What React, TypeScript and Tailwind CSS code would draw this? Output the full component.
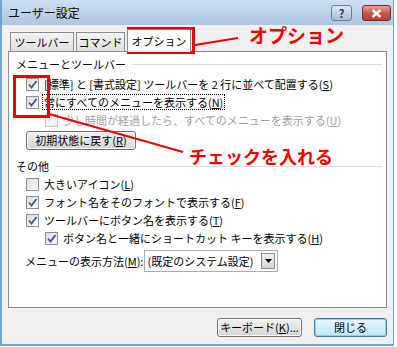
import type { ReactNode } from 'react';

const FONT = { fontFamily: '"Noto Sans CJK JP", "Noto Sans", sans-serif' };

function CheckBox({ checked, disabled }: { checked?: boolean; disabled?: boolean }) {
  return (
    <div
      className={`w-[13px] h-[13px] shrink-0 border flex items-center justify-center ${
        disabled ? 'border-[#c8c8c8] bg-[#f4f4f4]' : 'border-[#8f8f8f] bg-gradient-to-br from-[#dcdcdc] to-[#fbfbfb]'
      }`}
    >
      {checked && (
        <svg width="11" height="11" viewBox="0 0 11 11">
          <path d="M2 5.5 L4.5 8.5 L9.5 2" fill="none" stroke="#3b5a9a" strokeWidth="1.8" />
        </svg>
      )}
    </div>
  );
}

function Row({ checked, disabled, indent, focus, children }: { checked?: boolean; disabled?: boolean; indent?: boolean; focus?: boolean; children: ReactNode }) {
  return (
    <div className={`flex items-center h-[18px] ${indent ? 'pl-[36px]' : 'pl-[17px]'}`}>
      <CheckBox checked={checked} disabled={disabled} />
      <span
        className={`ml-[3px] px-px leading-[14px] whitespace-nowrap ${disabled ? 'text-[#a0a0a0]' : 'text-black'} ${
          focus ? 'border border-dotted border-black' : 'border border-transparent'
        }`}
      >
        {children}
      </span>
    </div>
  );
}

function GroupLabel({ children }: { children: ReactNode }) {
  return (
    <div className="flex items-center h-[16px] pl-[7px] pr-[4px]">
      <span className="whitespace-nowrap">{children}</span>
      <div className="flex-1 h-px bg-[#d5dfe5] ml-[6px] mt-px" />
    </div>
  );
}

function VistaButton({ children, isDefault, className = '' }: { children: ReactNode; isDefault?: boolean; className?: string }) {
  return (
    <div
      className={`h-[19px] rounded-[3px] border flex items-center justify-center whitespace-nowrap ${
        isDefault
          ? 'border-[#3c7fb1] shadow-[inset_0_0_0_1px_#8ed0f5] bg-gradient-to-b from-[#eaf6fd] to-[#bee6fd]'
          : 'border-[#707070] shadow-[inset_0_0_0_1px_#fcfcfc] bg-gradient-to-b from-[#f2f2f2] to-[#d5d5d5]'
      } ${className}`}
    >
      {children}
    </div>
  );
}

export default function App() {
  return (
    <div className="relative w-[397px] h-[347px] bg-white text-[11px] text-black overflow-hidden" style={FONT}>
      <div className="w-[394px] h-[346px] flex flex-col border-l-[2px] border-r border-b-[2px] border-[#6fa6cf] bg-[#f0f0f0]">
        {/* Title bar */}
        <div className="h-[25px] shrink-0 flex items-center bg-gradient-to-b from-[#cddff2] to-[#adc6e3] pl-[6px] pr-[2px]">
          <span className="leading-none text-[12px]">ユーザー設定</span>
          <div className="ml-auto flex items-center gap-[10px] mt-[1px]">
            <div className="w-[21px] h-[16px] rounded-[3px] border border-[#6d7f99] bg-gradient-to-b from-[#dde8f4] to-[#a9bcd6] flex items-center justify-center text-[11px] font-bold text-[#2a3850] leading-none">
              ?
            </div>
            <div className="w-[29px] h-[16px] rounded-[3px] border border-[#7c2a24] bg-gradient-to-b from-[#e3a396] via-[#c75a4a] to-[#b8412f] flex items-center justify-center">
              <svg width="11" height="9" viewBox="0 0 11 9">
                <path d="M1.5 1 L9.5 8 M9.5 1 L1.5 8" stroke="#fff" strokeWidth="2.4" />
              </svg>
            </div>
          </div>
        </div>

        {/* Body */}
        <div className="flex-1 flex flex-col px-[6px]">
          {/* Tabs */}
          <div className="h-[26px] flex items-end pl-[2px]">
            <div className="h-[19px] w-[64px] border border-b-0 border-[#898c95] bg-gradient-to-b from-[#f4f4f4] to-[#e0e0e0] flex items-center justify-center whitespace-nowrap">
              ツールバー
            </div>
            <div className="h-[19px] w-[49px] ml-[2px] border border-b-0 border-[#898c95] bg-gradient-to-b from-[#f4f4f4] to-[#e0e0e0] flex items-center justify-center whitespace-nowrap">
              コマンド
            </div>
            <div className="relative z-10 -mb-px h-[23px] w-[64px] ml-[2px] border border-b-0 border-[#898c95] bg-white flex items-center justify-center whitespace-nowrap">
              オプション
            </div>
          </div>

          {/* Panel */}
          <div className="h-[257px] border border-[#898c95] bg-white flex flex-col pt-[4px]">
            <GroupLabel>メニューとツールバー</GroupLabel>
            <div className="mt-[3px]">
              <Row checked>
                [標準] と [書式設定] ツールバーを 2 行に並べて配置する(<u>S</u>)
              </Row>
              <Row checked focus>
                常にすべてのメニューを表示する(<u>N</u>)
              </Row>
              <Row disabled indent>
                少し時間が経過したら、すべてのメニューを表示する(<u>U</u>)
              </Row>
            </div>
            <div className="pl-[17px] mt-[2px]">
              <VistaButton className="w-[110px]">
                初期状態に戻す(<u>R</u>)
              </VistaButton>
            </div>
            <div className="mt-[8px]">
              <GroupLabel>その他</GroupLabel>
            </div>
            <div className="mt-px">
              <Row>
                大きいアイコン(<u>L</u>)
              </Row>
              <Row checked>
                フォント名をそのフォントで表示する(<u>F</u>)
              </Row>
              <Row checked>
                ツールバーにボタン名を表示する(<u>T</u>)
              </Row>
              <Row checked indent>
                ボタン名と一緒にショートカット キーを表示する(<u>H</u>)
              </Row>
            </div>
            <div className="flex items-center pl-[16px] mt-[3px]">
              <span className="whitespace-nowrap">
                メニューの表示方法(<u>M</u>):
              </span>
              <div className="ml-[1px] w-[134px] h-[22px] border border-[#a5acb5] bg-white flex items-center pl-[2px] pr-[2px]">
                <span className="flex-1 whitespace-nowrap overflow-hidden">(既定のシステム設定)</span>
                <div className="w-[14px] h-[16px] border border-[#8a8a8a] bg-gradient-to-b from-[#f2f2f2] to-[#d6d6d6] flex items-center justify-center">
                  <svg width="7" height="4" viewBox="0 0 7 4">
                    <path d="M0 0 H7 L3.5 4 Z" fill="#000" />
                  </svg>
                </div>
              </div>
            </div>
          </div>

          {/* Bottom buttons */}
          <div className="flex justify-end gap-[12px] mt-[10px]">
            <VistaButton className="w-[85px]">
              キーボード(<u>K</u>)...
            </VistaButton>
            <VistaButton isDefault className="w-[73px]">
              閉じる
            </VistaButton>
          </div>
        </div>
      </div>

      {/* Red annotations */}
      <div className="absolute left-[127px] top-[27px] w-[68px] h-[27px] border-[3px] border-[#f00000] pointer-events-none" />
      <div className="absolute left-[13px] top-[75px] w-[37px] h-[43px] border-[3px] border-[#f00000] pointer-events-none" />
      <svg className="absolute left-0 top-0 pointer-events-none" width="397" height="347">
        <line x1="195" y1="45" x2="238" y2="38" stroke="#f00000" strokeWidth="2" />
        <line x1="49" y1="114" x2="183" y2="152" stroke="#f00000" strokeWidth="2" />
      </svg>
      <div className="absolute left-[249px] top-[23px] text-[19px] font-bold text-[#f00000] leading-[24px] whitespace-nowrap">
        オプション
      </div>
      <div className="absolute left-[189px] top-[144px] text-[18px] font-bold text-[#f00000] leading-[24px] whitespace-nowrap">
        チェックを入れる
      </div>
    </div>
  );
}
